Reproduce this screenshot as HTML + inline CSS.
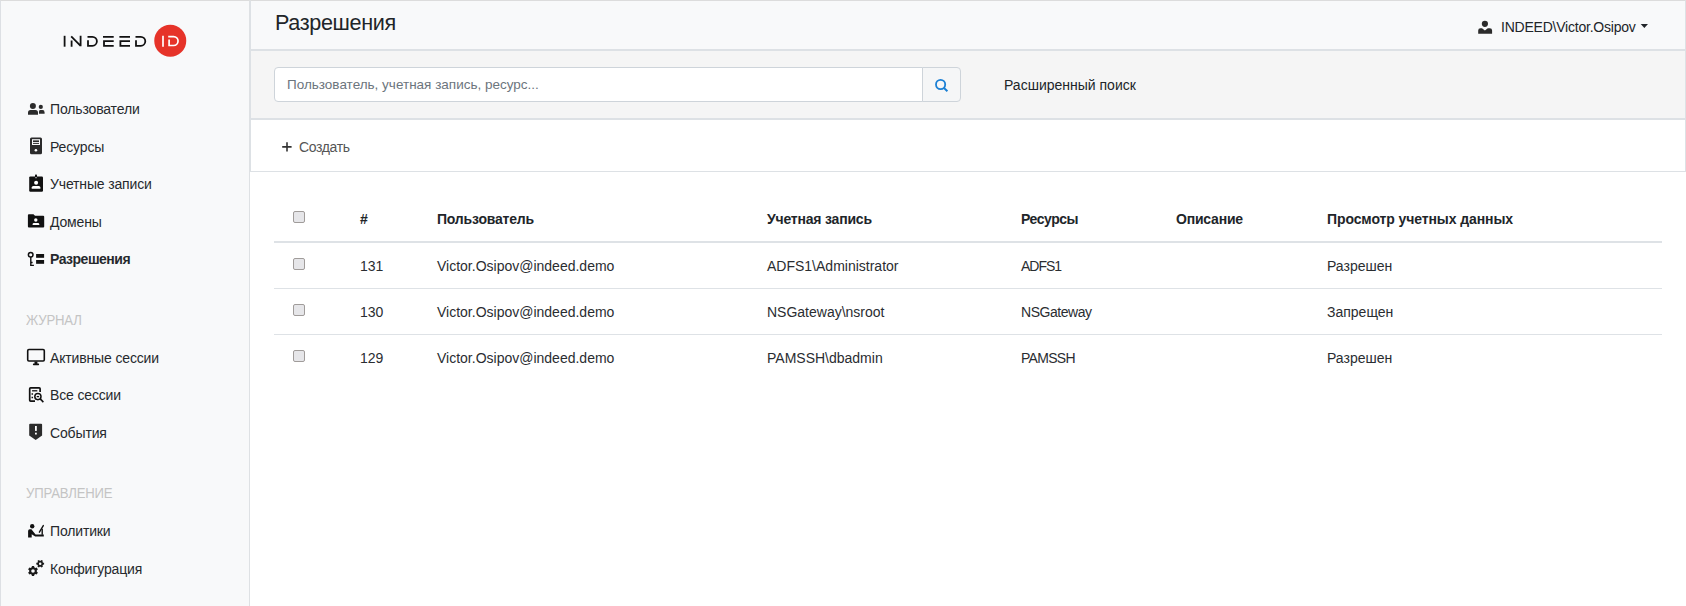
<!DOCTYPE html>
<html><head><meta charset="utf-8">
<style>
*{box-sizing:border-box}
html,body{margin:0;padding:0}
body{width:1686px;height:606px;overflow:hidden;position:relative;background:#fff;font-family:"Liberation Sans",sans-serif;color:#212529;font-size:14px}
.abs{position:absolute;white-space:nowrap}
#sidebar{position:absolute;left:0;top:0;width:250px;height:606px;background:#f8f9fa;border-left:1px solid #dde0e4;border-top:1px solid #dcdcdc;border-right:1px solid #dee1e4}
#header{position:absolute;left:250px;border-left:1px solid #dde1e5;top:0;width:1436px;height:51px;background:#f8f9fa;border-top:1px solid #dcdcdc;border-bottom:2px solid #dde1e5;border-right:1px solid #dde1e5}
#searchbar{position:absolute;left:250px;border-left:1px solid #dde1e5;top:51px;width:1436px;height:69px;background:#f5f5f5;border-bottom:2px solid #dde1e5;border-right:1px solid #dde1e5}
#createbar{position:absolute;left:250px;border-left:1px solid #dde1e5;top:120px;width:1436px;height:52px;background:#fff;border-bottom:1px solid #dde1e5;border-right:1px solid #dde1e5}
.nav{font-size:14px;color:#26292d;letter-spacing:-0.15px}
.sec{font-size:14px;color:#c4c4c4;letter-spacing:-0.2px;transform:scaleX(0.94);transform-origin:0 0}
.ico{position:absolute}
.th{font-weight:bold;font-size:14px;color:#212529;letter-spacing:-0.2px}
.td{font-size:14px;color:#2a2d31}
.cb{position:absolute;width:12px;height:12px;border:1px solid #a09c9a;border-radius:2px;background:#e6e6e9}
.line{position:absolute;left:274px;width:1388px;background:#dee2e6}
</style></head>
<body>
<div id="sidebar"></div>
<div id="header"></div>
<div id="searchbar"></div>
<div id="createbar"></div>

<!-- logo -->
<svg class="ico" style="left:55px;top:20px" width="140" height="45" viewBox="55 20 140 45">
 <g stroke="#111" stroke-width="1.8" fill="none" stroke-linecap="butt">
  <path d="M64.6 35.8V46.7"/>
  <path d="M71.6 40.4V46.7 M71.2 36.3 L80.6 45.8 M80.6 35.8V46.2"/>
  <path d="M88 40.2V45.8 H92.4 A4.5 4.5 0 0 0 92.4 36.8 H87.5"/>
  <path d="M103 36.8H113.7 M113.7 41.1H104V45.8H113.7"/>
  <path d="M119.4 36.8H130 M130 41.1H120.4V45.8H130"/>
  <path d="M136 40.2V45.8 H140.8 A4.5 4.5 0 0 0 140.8 36.8 H135.5"/>
 </g>
 <circle cx="170.25" cy="40.8" r="16" fill="#e63329"/>
 <g stroke="#fff" stroke-width="1.7" fill="none">
  <path d="M163 35.8V46.8"/>
  <path d="M169.1 39.5V45.5 H173.6 A4.45 4.45 0 0 0 173.6 36.6 H168.2"/>
 </g>
</svg>

<!-- nav items -->
<div class="abs nav" style="left:50px;top:101px">Пользователи</div>
<div class="abs nav" style="left:50px;top:139px">Ресурсы</div>
<div class="abs nav" style="left:50px;top:176px">Учетные записи</div>
<div class="abs nav" style="left:50px;top:214px">Домены</div>
<div class="abs nav" style="left:50px;top:251px;font-weight:bold;letter-spacing:-0.5px">Разрешения</div>
<div class="abs sec" style="left:26px;top:312px">ЖУРНАЛ</div>
<div class="abs nav" style="left:50px;top:350px">Активные сессии</div>
<div class="abs nav" style="left:50px;top:387px">Все сессии</div>
<div class="abs nav" style="left:50px;top:425px">События</div>
<div class="abs sec" style="left:26px;top:485px">УПРАВЛЕНИЕ</div>
<div class="abs nav" style="left:50px;top:523px">Политики</div>
<div class="abs nav" style="left:50px;top:561px">Конфигурация</div>

<!-- header -->
<div class="abs" style="left:275px;top:10px;font-size:21.6px;letter-spacing:-0.35px;color:#212529">Разрешения</div>
<div class="abs" style="left:1501px;top:19px;font-size:14px;color:#212529;letter-spacing:-0.22px">INDEED\Victor.Osipov</div>

<!-- search -->
<div class="abs" style="left:274px;top:67px;width:649px;height:35px;background:#fff;border:1px solid #ced4da;border-radius:4px 0 0 4px"></div>
<div class="abs" style="left:922px;top:67px;width:39px;height:35px;background:#f5f6f7;border:1px solid #ced4da;border-radius:0 4px 4px 0"></div>
<div class="abs" style="left:287px;top:77px;font-size:13.5px;color:#6c757d">Пользователь, учетная запись, ресурс...</div>
<div class="abs" style="left:1004px;top:77px;font-size:14px;color:#212529">Расширенный поиск</div>

<!-- create -->
<div class="abs" style="left:299px;top:139px;font-size:14px;color:#555;letter-spacing:-0.35px">Создать</div>

<!-- table -->
<div class="line" style="top:241px;height:2px"></div>
<div class="line" style="top:288px;height:1px"></div>
<div class="line" style="top:334px;height:1px"></div>

<div class="cb" style="left:293px;top:211px"></div>
<div class="cb" style="left:293px;top:258px"></div>
<div class="cb" style="left:293px;top:304px"></div>
<div class="cb" style="left:293px;top:350px"></div>

<div class="abs th" style="left:360px;top:211px">#</div>
<div class="abs th" style="left:437px;top:211px">Пользователь</div>
<div class="abs th" style="left:767px;top:211px">Учетная запись</div>
<div class="abs th" style="left:1021px;top:211px;letter-spacing:-0.45px">Ресурсы</div>
<div class="abs th" style="left:1176px;top:211px">Описание</div>
<div class="abs th" style="left:1327px;top:211px;letter-spacing:-0.1px">Просмотр учетных данных</div>

<div class="abs td" style="left:360px;top:258px">131</div>
<div class="abs td" style="left:437px;top:258px">Victor.Osipov@indeed.demo</div>
<div class="abs td" style="left:767px;top:258px">ADFS1\Administrator</div>
<div class="abs td" style="left:1021px;top:258px;letter-spacing:-1px">ADFS1</div>
<div class="abs td" style="left:1327px;top:258px">Разрешен</div>

<div class="abs td" style="left:360px;top:304px">130</div>
<div class="abs td" style="left:437px;top:304px">Victor.Osipov@indeed.demo</div>
<div class="abs td" style="left:767px;top:304px">NSGateway\nsroot</div>
<div class="abs td" style="left:1021px;top:304px;letter-spacing:-0.45px">NSGateway</div>
<div class="abs td" style="left:1327px;top:304px">Запрещен</div>

<div class="abs td" style="left:360px;top:350px">129</div>
<div class="abs td" style="left:437px;top:350px">Victor.Osipov@indeed.demo</div>
<div class="abs td" style="left:767px;top:350px">PAMSSH\dbadmin</div>
<div class="abs td" style="left:1021px;top:350px;letter-spacing:-0.7px">PAMSSH</div>
<div class="abs td" style="left:1327px;top:350px">Разрешен</div>


<!-- icons overlay -->
<svg class="ico" style="left:0;top:0" width="1686" height="606" viewBox="0 0 1686 606">
 <!-- users -->
 <g fill="#2b2b2b">
  <circle cx="32.9" cy="106" r="3"/>
  <path d="M28 114.7 V112.6 Q28 110.1 30.5 110.1 H35.4 Q38 110.1 38 112.6 V114.7 Z"/>
  <circle cx="40.8" cy="106.9" r="2.1"/>
  <path d="M39 113.7 V111.2 Q39 110.1 40.5 110.1 H42.5 Q44.6 110.1 44.6 112.4 V113.7 Z"/>
 </g>
 <!-- server -->
 <g>
  <rect x="30" y="137.5" width="12" height="16.7" rx="1.5" fill="#2b2b2b"/>
  <rect x="32" y="139.2" width="8" height="5.8" fill="#f8f9fa"/>
  <rect x="33" y="140.4" width="6" height="1.7" fill="#2b2b2b"/>
  <rect x="33" y="143" width="6" height="0.9" fill="#2b2b2b"/>
  <circle cx="35.9" cy="150.2" r="1.3" fill="#fff"/>
 </g>
 <!-- id badge -->
 <g>
  <rect x="29.2" y="176.4" width="13.8" height="15.4" rx="1.2" fill="#111"/>
  <rect x="35" y="174.6" width="2" height="3" rx="0.6" fill="#111"/>
  <rect x="35.4" y="177.2" width="1.2" height="1" fill="#fff"/>
  <circle cx="36.1" cy="182.7" r="2" fill="#fff"/>
  <path d="M31.7 188.8 V187.6 Q31.7 186 33.4 186 H38.8 Q40.4 186 40.4 187.6 V188.8 Z" fill="#fff"/>
 </g>
 <!-- folder -->
 <g>
  <path d="M27.9 215.2 Q27.9 214.2 28.9 214.2 H33.5 L35 215.8 H43.2 Q44.2 215.8 44.2 216.8 V226.4 Q44.2 227.4 43.2 227.4 H28.9 Q27.9 227.4 27.9 226.4 Z" fill="#111"/>
  <circle cx="35.8" cy="220" r="1.7" fill="#fff"/>
  <path d="M32.6 225 V224.3 Q32.6 223 34 223 H37.9 Q39.3 223 39.3 224.3 V225 Z" fill="#fff"/>
 </g>
 <!-- key list -->
 <g>
  <circle cx="30.7" cy="254.8" r="2.3" fill="none" stroke="#111" stroke-width="1.5"/>
  <path d="M30.8 257 V265.4 H33.9 M30.8 262.5 H32.6" fill="none" stroke="#111" stroke-width="1.4"/>
  <rect x="36.1" y="254" width="8" height="3.8" fill="#111"/>
  <rect x="36.1" y="260" width="8" height="3.8" fill="#111"/>
 </g>
 <!-- monitor -->
 <g>
  <rect x="27.7" y="349.5" width="16.6" height="11.5" rx="1.2" fill="none" stroke="#111" stroke-width="1.6"/>
  <rect x="34.5" y="361.5" width="2.9" height="2.5" fill="#111"/>
  <rect x="32.9" y="363.6" width="6.2" height="1.6" rx="0.6" fill="#111"/>
 </g>
 <!-- all sessions -->
 <g fill="none" stroke="#111">
  <path d="M35 401.2 H30.6 Q29.7 401.2 29.7 400.3 V388.7 Q29.7 387.8 30.6 387.8 H39.2 Q40.1 387.8 40.1 388.7 V392" stroke-width="1.7"/>
  <path d="M32.1 390.8 H37.3" stroke-width="1.3"/>
  <path d="M32.3 393.2 V394.7 M32.3 396.8 V398.3" stroke-width="1.5"/>
  <circle cx="37.9" cy="396.6" r="3.1" stroke-width="1.5"/>
  <path d="M36.7 396.6 H39.1" stroke-width="1.3"/>
  <path d="M40.2 398.9 L43.4 402.1" stroke-width="1.6"/>
 </g>
 <!-- shield -->
 <g>
  <path d="M29.2 424.8 Q29.2 423.8 30.2 423.8 H41.1 Q42.1 423.8 42.1 424.8 V435.4 L35.7 439.9 L29.2 435.4 Z" fill="#2b2b2b"/>
  <rect x="35" y="426" width="1.8" height="4.9" fill="#fff"/>
  <rect x="35" y="432.7" width="1.8" height="1.8" fill="#fff"/>
 </g>
 <!-- teacher -->
 <g fill="#111">
  <circle cx="32.2" cy="526.3" r="2.2"/>
  <path d="M28.1 537.5 V531 Q28.1 529.3 29.8 529.3 H31.4 L35.6 534.5 H43.8 V536.6 H35.2 L31.7 534.3 V537.5 Z"/>
  <rect x="41.5" y="528.8" width="1.4" height="6"/>
  <path d="M39.4 532.2 L43.3 525.6" stroke="#111" stroke-width="1.4" stroke-linecap="round"/>
 </g>
 <!-- cogs -->
 <g fill="#1a1a1a" fill-rule="evenodd">
  <path d="M31.75 567.31 L31.87 566.03 L34.13 566.03 L34.25 567.31 L35.57 568.07 L36.75 567.54 L37.87 569.49 L36.83 570.24 L36.83 571.76 L37.87 572.51 L36.75 574.46 L35.57 573.93 L34.25 574.69 L34.13 575.97 L31.87 575.97 L31.75 574.69 L30.43 573.93 L29.25 574.46 L28.13 572.51 L29.17 571.76 L29.17 570.24 L28.13 569.49 L29.25 567.54 L30.43 568.07 Z M34.80 571.00 A1.8 1.8 0 1 0 31.20 571.00 A1.8 1.8 0 1 0 34.80 571.00 Z"/>
  <path d="M40.79 560.76 L41.39 559.88 L42.92 560.76 L42.46 561.72 L43.04 562.74 L44.10 562.82 L44.10 564.58 L43.04 564.66 L42.46 565.68 L42.92 566.64 L41.39 567.52 L40.79 566.64 L39.61 566.64 L39.01 567.52 L37.48 566.64 L37.94 565.68 L37.36 564.66 L36.30 564.58 L36.30 562.82 L37.36 562.74 L37.94 561.72 L37.48 560.76 L39.01 559.88 L39.61 560.76 Z M41.45 563.70 A1.25 1.25 0 1 0 38.95 563.70 A1.25 1.25 0 1 0 41.45 563.70 Z"/>
 </g>
 <!-- header user -->
 <g fill="#2b2b2b">
  <circle cx="1484.9" cy="23.8" r="3.1"/>
  <path d="M1478.2 33.8 V30.5 Q1478.2 28.2 1480.5 28.2 H1482 L1484.9 30.6 L1487.8 28.2 H1489.8 Q1492.1 28.2 1492.1 30.5 V33.8 Z"/>
 </g>
 <!-- caret -->
 <path d="M1640.7 24.1 H1648 L1644.35 28 Z" fill="#212529"/>
 <!-- search -->
 <g fill="none" stroke="#1a7fd4">
  <circle cx="940.6" cy="84.5" r="4.6" stroke-width="1.8"/>
  <path d="M944 88 L947.4 91.2" stroke-width="2"/>
 </g>
 <!-- plus -->
 <path d="M287 142.2 V151.6 M282.2 146.9 H291.6" stroke="#333" stroke-width="1.6"/>
</svg>

</body></html>
